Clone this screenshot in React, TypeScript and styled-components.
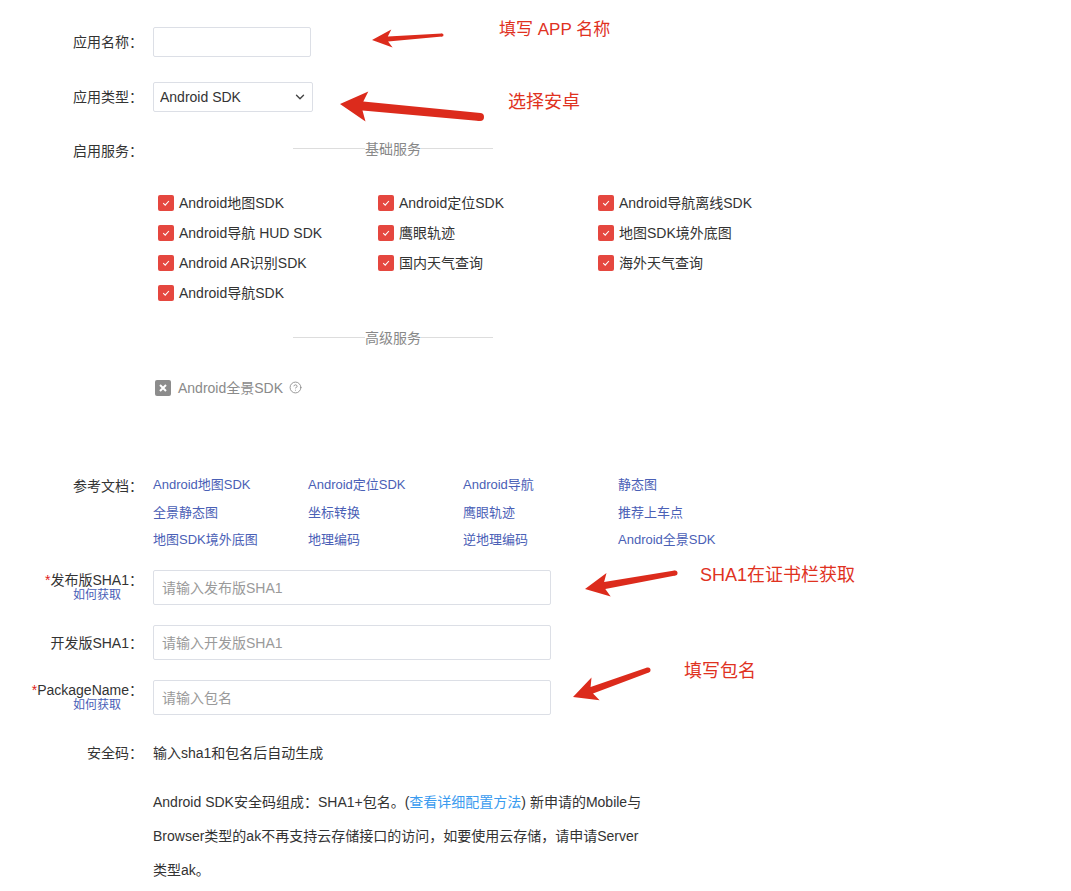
import styled, { createGlobalStyle } from 'styled-components';
import { ChevronDown, CircleHelp } from 'lucide-react';

const GlobalStyle = createGlobalStyle`
  html, body {
    margin: 0;
    padding: 0;
    background: #ffffff;
  }
  body {
    font-family: "Liberation Sans", "Noto Sans CJK SC", sans-serif;
    color: #333333;
  }
`;

const Page = styled.div`
  position: relative;
  width: 1071px;
  min-height: 891px;
  padding-top: 27px;
  box-sizing: border-box;
`;

const Row = styled.div<{ $align?: string; $mt?: number }>`
  display: flex;
  align-items: ${(p) => p.$align || 'center'};
  margin-top: ${(p) => p.$mt || 0}px;
`;

const Label = styled.div<{ $pt?: number; $lh?: number }>`
  width: 143px;
  flex-shrink: 0;
  margin-right: 10px;
  padding-top: ${(p) => p.$pt || 0}px;
  text-align: right;
  font-size: 14px;
  line-height: ${(p) => p.$lh || 20}px;
  color: #333333;
  display: flex;
  flex-direction: column;
  align-items: flex-end;
`;

const LabelMain = styled.span`
  line-height: 18px;
  white-space: nowrap;
`;

const Required = styled.span`
  color: #e02020;
`;

const HowTo = styled.a`
  font-size: 12px;
  line-height: 12px;
  color: #4a60b6;
  margin-right: 22px;
  text-decoration: none;
`;

const TextInput = styled.input<{ $w: number; $h: number }>`
  width: ${(p) => p.$w}px;
  height: ${(p) => p.$h}px;
  box-sizing: border-box;
  border: 1px solid #dcdfe6;
  border-radius: 2px;
  padding: 0 8px;
  font-family: inherit;
  font-size: 14px;
  color: #333;
  outline: none;

  &::placeholder {
    color: #9a9a9a;
  }
`;

const SelectWrap = styled.div`
  position: relative;
  width: 160px;
  height: 30px;
`;

const Select = styled.select`
  width: 100%;
  height: 100%;
  box-sizing: border-box;
  appearance: none;
  border: 1px solid #dcdfe6;
  border-radius: 2px;
  background: #fff;
  padding: 0 6px;
  font-family: inherit;
  font-size: 14px;
  color: #333;
  outline: none;
`;

const SelectArrow = styled.span`
  position: absolute;
  right: 6px;
  top: 8px;
  color: #444;
  pointer-events: none;
  display: flex;
`;

const Column = styled.div`
  display: flex;
  flex-direction: column;
`;

const Divider = styled.div<{ $mt?: number }>`
  display: flex;
  align-items: center;
  width: 200px;
  height: 20px;
  margin-left: 140px;
  margin-top: ${(p) => p.$mt || 0}px;
  font-size: 14px;
  color: #888888;

  &::before,
  &::after {
    content: '';
    flex: 1;
    height: 1px;
    background: #dddddd;
  }
`;

const CheckGrid = styled.div`
  display: grid;
  grid-template-columns: repeat(3, 220px);
  grid-auto-rows: 30px;
  margin-top: 29px;
  padding-left: 5px;
`;

const CheckItem = styled.label<{ $disabled?: boolean }>`
  display: flex;
  align-items: center;
  gap: ${(p) => (p.$disabled ? 7 : 5)}px;
  font-size: 14px;
  color: ${(p) => (p.$disabled ? '#8a8a8a' : '#333333')};
  white-space: nowrap;
`;

const Box = styled.span<{ $disabled?: boolean }>`
  width: 16px;
  height: 16px;
  margin-top: 1px;
  border-radius: 2px;
  background: ${(p) => (p.$disabled ? '#8c8c8c' : '#e5473f')};
  display: flex;
  align-items: center;
  justify-content: center;
  flex-shrink: 0;
`;

const DisabledRow = styled.div`
  display: flex;
  align-items: center;
  height: 30px;
  margin-top: 25px;
  padding-left: 2px;
`;

const HelpIcon = styled.span`
  display: flex;
  margin-left: 6px;
  color: #8a8a8a;
`;

const DocGrid = styled.div`
  display: grid;
  grid-template-columns: repeat(4, 155px);
  grid-auto-rows: 27.5px;
  align-items: center;
  margin-top: -2px;
`;

const DocLink = styled.a`
  font-size: 13px;
  color: #4a60b6;
  text-decoration: none;
  white-space: nowrap;
`;

const Plain = styled.div`
  font-size: 14px;
  line-height: 20px;
  color: #333;
`;

const Note = styled.p`
  margin: 22px 0 0 153px;
  font-size: 14px;
  line-height: 34px;
  color: #333;
  white-space: nowrap;
`;

const NoteLink = styled.a`
  color: #3a9bef;
  text-decoration: none;
`;

const Overlay = styled.svg`
  position: absolute;
  left: 0;
  top: 0;
  pointer-events: none;
`;

const Annotation = styled.span<{ $x: number; $y: number; $size?: number }>`
  position: absolute;
  left: ${(p) => p.$x}px;
  top: ${(p) => p.$y}px;
  font-size: ${(p) => p.$size || 18}px;
  line-height: 24px;
  color: #e0321f;
  white-space: nowrap;
`;

type Arrow = {
  tail: [number, number];
  tip: [number, number];
  tailW: number;
  neckW: number;
  headLen: number;
  headW: number;
};

const arrows: Arrow[] = [
  { tail: [442, 35], tip: [372, 40], tailW: 3, neckW: 5, headLen: 16, headW: 18 },
  { tail: [480, 117], tip: [340, 104], tailW: 8, neckW: 9, headLen: 23, headW: 30 },
  { tail: [675, 573], tip: [585, 589], tailW: 5, neckW: 7, headLen: 20, headW: 24 },
  { tail: [648, 670], tip: [573, 697], tailW: 5, neckW: 7, headLen: 20, headW: 24 },
];

const arrowPoints = (a: Arrow) => {
  const [tx, ty] = a.tail;
  const [hx, hy] = a.tip;
  const dx = hx - tx;
  const dy = hy - ty;
  const len = Math.hypot(dx, dy);
  const ux = dx / len;
  const uy = dy / len;
  const px = -uy;
  const py = ux;
  const nx = hx - ux * a.headLen;
  const ny = hy - uy * a.headLen;
  const bx = nx - ux * 4;
  const by = ny - uy * 4;
  const pts = [
    [tx + (px * a.tailW) / 2, ty + (py * a.tailW) / 2],
    [nx + (px * a.neckW) / 2, ny + (py * a.neckW) / 2],
    [bx + (px * a.headW) / 2, by + (py * a.headW) / 2],
    [hx, hy],
    [bx - (px * a.headW) / 2, by - (py * a.headW) / 2],
    [nx - (px * a.neckW) / 2, ny - (py * a.neckW) / 2],
    [tx - (px * a.tailW) / 2, ty - (py * a.tailW) / 2],
  ];
  return pts.map((p) => `${p[0].toFixed(1)},${p[1].toFixed(1)}`).join(' ');
};

const Check = () => (
  <svg width="10" height="10" viewBox="0 0 10 10">
    <path d="M2.2 5.2 L4.2 7.1 L7.9 3" fill="none" stroke="#fff" strokeWidth="1.1" />
  </svg>
);

const Cross = () => (
  <svg width="10" height="10" viewBox="0 0 10 10">
    <path d="M2 2 L8 8 M8 2 L2 8" fill="none" stroke="#fff" strokeWidth="2" />
  </svg>
);

const basicServices = [
  'Android地图SDK',
  'Android定位SDK',
  'Android导航离线SDK',
  'Android导航 HUD SDK',
  '鹰眼轨迹',
  '地图SDK境外底图',
  'Android AR识别SDK',
  '国内天气查询',
  '海外天气查询',
  'Android导航SDK',
];

const docs = [
  'Android地图SDK',
  'Android定位SDK',
  'Android导航',
  '静态图',
  '全景静态图',
  '坐标转换',
  '鹰眼轨迹',
  '推荐上车点',
  '地图SDK境外底图',
  '地理编码',
  '逆地理编码',
  'Android全景SDK',
];

export default function App() {
  return (
    <>
      <GlobalStyle />
      <Page>
        <Row>
          <Label>应用名称：</Label>
          <TextInput $w={158} $h={30} />
        </Row>

        <Row $mt={25}>
          <Label>应用类型：</Label>
          <SelectWrap>
            <Select defaultValue="android">
              <option value="android">Android SDK</option>
            </Select>
            <SelectArrow>
              <ChevronDown size={14} strokeWidth={2.4} />
            </SelectArrow>
          </SelectWrap>
        </Row>

        <Row $mt={26} $align="flex-start">
          <Label $pt={3}>启用服务：</Label>
          <Column>
            <Divider>基础服务</Divider>
            <CheckGrid>
              {basicServices.map((s) => (
                <CheckItem key={s}>
                  <Box>
                    <Check />
                  </Box>
                  {s}
                </CheckItem>
              ))}
            </CheckGrid>
            <Divider $mt={20}>高级服务</Divider>
            <DisabledRow>
              <CheckItem $disabled>
                <Box $disabled>
                  <Cross />
                </Box>
                Android全景SDK
              </CheckItem>
              <HelpIcon>
                <CircleHelp size={13} strokeWidth={1.6} />
              </HelpIcon>
            </DisabledRow>
          </Column>
        </Row>

        <Row $mt={70} $align="flex-start">
          <Label $lh={28}>参考文档：</Label>
          <DocGrid>
            {docs.map((d) => (
              <DocLink key={d}>{d}</DocLink>
            ))}
          </DocGrid>
        </Row>

        <Row $mt={17.5} $align="flex-start">
          <Label $pt={1}>
            <LabelMain>
              <Required>*</Required>发布版SHA1：
            </LabelMain>
            <HowTo>如何获取</HowTo>
          </Label>
          <TextInput $w={398} $h={35} placeholder="请输入发布版SHA1" />
        </Row>

        <Row $mt={20}>
          <Label>开发版SHA1：</Label>
          <TextInput $w={398} $h={35} placeholder="请输入开发版SHA1" />
        </Row>

        <Row $mt={20} $align="flex-start">
          <Label $pt={1}>
            <LabelMain>
              <Required>*</Required>PackageName：
            </LabelMain>
            <HowTo>如何获取</HowTo>
          </Label>
          <TextInput $w={398} $h={35} placeholder="请输入包名" />
        </Row>

        <Row $mt={28}>
          <Label>安全码：</Label>
          <Plain>输入sha1和包名后自动生成</Plain>
        </Row>

        <Note>
          Android SDK安全码组成：SHA1+包名。(<NoteLink>查看详细配置方法</NoteLink>) 新申请的Mobile与
          <br />
          Browser类型的ak不再支持云存储接口的访问，如要使用云存储，请申请Server
          <br />
          类型ak。
        </Note>

        <Overlay width="1071" height="891" viewBox="0 0 1071 891">
          {arrows.map((a, i) => (
            <g key={i} fill="#dc2b1c">
              <polygon points={arrowPoints(a)} />
              <circle cx={a.tail[0]} cy={a.tail[1]} r={a.tailW / 2} />
            </g>
          ))}
        </Overlay>

        <Annotation $x={499} $y={18} $size={17}>填写 APP 名称</Annotation>
        <Annotation $x={508} $y={90}>选择安卓</Annotation>
        <Annotation $x={700} $y={563}>SHA1在证书栏获取</Annotation>
        <Annotation $x={684} $y={659}>填写包名</Annotation>
      </Page>
    </>
  );
}
